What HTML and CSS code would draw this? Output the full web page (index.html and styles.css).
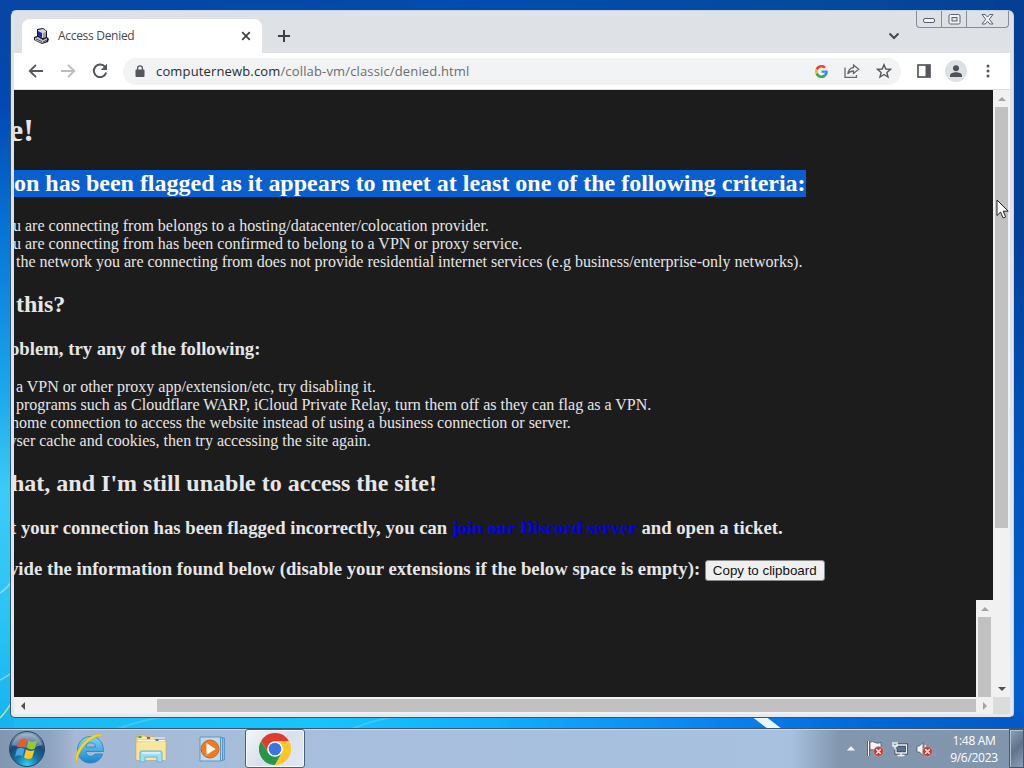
FILE: index.html
```html
<!DOCTYPE html>
<html lang="en">
<head>
<meta charset="utf-8">
<title>Access Denied</title>
<link rel="stylesheet" href="styles.css">
</head>
<body>
<div class="desktop">
  <svg class="wallpaper" viewBox="0 0 1024 768">
    <defs>
      <linearGradient id="left" x1="0" y1="0" x2="0" y2="1">
        <stop offset="0" stop-color="#0745a3"/>
        <stop offset=".14" stop-color="#0349b3"/>
        <stop offset=".3" stop-color="#0674d6"/>
        <stop offset=".5" stop-color="#1ba5ea"/>
        <stop offset=".64" stop-color="#3dcbf5"/>
        <stop offset=".8" stop-color="#2ac4f5"/>
        <stop offset="1" stop-color="#0caeee"/>
      </linearGradient>
      <linearGradient id="right" x1="0" y1="0" x2="0" y2="1">
        <stop offset="0" stop-color="#053f94"/>
        <stop offset=".3" stop-color="#043f98"/>
        <stop offset=".6" stop-color="#0055bd"/>
        <stop offset="1" stop-color="#0560cd"/>
      </linearGradient>
      <linearGradient id="bottom">
        <stop offset="0" stop-color="#1abaf2"/>
        <stop offset=".3" stop-color="#18c4fc"/>
        <stop offset=".48" stop-color="#10aefc"/>
        <stop offset=".68" stop-color="#0a86ee"/>
        <stop offset=".85" stop-color="#0068d6"/>
        <stop offset="1" stop-color="#0458c4"/>
      </linearGradient>
      <linearGradient id="top">
        <stop offset="0" stop-color="#0745a3"/>
        <stop offset=".5" stop-color="#024cae"/>
        <stop offset=".8" stop-color="#054a9c"/>
        <stop offset="1" stop-color="#053f94"/>
      </linearGradient>
    </defs>
    <rect width="1024" height="30" fill="url(#top)"/>
    <rect width="30" height="768" fill="url(#left)"/>
    <rect x="994" width="30" height="768" fill="url(#right)"/>
    <rect y="712" x="14" width="1010" height="20" fill="url(#bottom)"/>
    <path d="M0 593Q8 588 14 578M0 680Q8 676 14 671" stroke="#a5e8fb" stroke-width="1.500" opacity=".7" fill="none"/>
    <path d="M0 718Q7 711 14 698" stroke="#b9e69a" stroke-width="1.500" fill="none"/>
    <path d="M115 730Q150 716 190 714M350 730Q370 720 410 714" stroke="#6ad9fb" stroke-width="2" opacity=".4" fill="none"/>
    <path d="M751 716h14l17 13h-14z" fill="#e9f8ff"/>
  </svg>

  <div class="window">
    <div class="tabstrip">
      <div class="tab">
        <svg class="favicon" width="16" height="16" viewBox="0 0 16 16">
          <path d="M4 1l6-1 4 3v6l2 2-1 3-6 2-8-4v-3l3-1z" fill="#16162a"/>
          <path d="M5 2l5-1 3 2v6l-4 1-4-3z" fill="#d8d8dc"/>
          <path d="M5 3l4 2v5l-4-3z" fill="#2424a8"/>
          <path d="M10 5l3-1v5l-3 1z" fill="#9c9ca4"/>
          <path d="M2 10l3-1 5 3 4-2v3l-5 2-7-3z" fill="#c4c4cc"/>
          <path d="M3 11l6 2.500M10 14l4-2" stroke="#333" stroke-width=".8"/>
        </svg>
        <span class="tab-title">Access Denied</span>
        <svg width="10" height="10" viewBox="0 0 10 10"><path d="M1.200 1.200l7.600 7.600M8.800 1.200l-7.600 7.600" stroke="#3c4043" stroke-width="1.700"/></svg>
      </div>
      <svg class="new-tab" width="14" height="14" viewBox="0 0 14 14"><path d="M7 1v12M1 7h12" stroke="#3c4043" stroke-width="2"/></svg>
      <svg class="tab-search" width="12" height="8" viewBox="0 0 12 8"><path d="M1.500 1.500L6 6l4.500-4.500" stroke="#45484c" stroke-width="2" fill="none"/></svg>
      <div class="win-buttons">
        <span class="min"><svg width="14" height="6" viewBox="0 0 14 6"><rect x="1.500" y=".5" width="11" height="4" rx="1.500" fill="#f4f5f8" stroke="#5b6170"/></svg></span>
        <span class="max"><svg width="13" height="11" viewBox="0 0 13 11"><rect x="1" y=".5" width="11" height="9.500" rx="1.500" fill="#f4f5f8" stroke="#5b6170"/><rect x="4" y="3.500" width="5" height="3.500" fill="#e2e5eb" stroke="#5b6170"/></svg></span>
        <span class="close"><svg width="13" height="11" viewBox="0 0 13 11"><path d="M1 .5h3.200l2.300 2.600L8.800.5H12L8.300 5.300l3.700 4.700H8.800L6.500 7.400 4.200 10H1l3.700-4.700z" fill="#f4f5f8" stroke="#5b6170"/></svg></span>
      </div>
    </div>

    <div class="toolbar">
      <svg width="16" height="16" viewBox="0 0 16 16"><path d="M15 8H2M8 1.800L1.800 8 8 14.200" stroke="#54585c" stroke-width="1.900" fill="none"/></svg>
      <svg width="16" height="16" viewBox="0 0 16 16"><path d="M1 8h13M8 1.800L14.200 8 8 14.200" stroke="#b9bbbe" stroke-width="1.900" fill="none"/></svg>
      <svg width="16" height="16" viewBox="0 0 16 16"><path d="M13.400 4.300A6.300 6.300 0 1 0 14.200 9.500" stroke="#54585c" stroke-width="2" fill="none"/><path d="M15 .8v6.200H8.800z" fill="#54585c"/></svg>
      <div class="omnibox">
        <svg class="lock" width="10" height="13" viewBox="0 0 10 13"><rect x=".5" y="4.500" width="9" height="7.500" rx="1" fill="#54585c"/><path d="M2.600 5V3.200a2.400 2.400 0 0 1 4.800 0V5" stroke="#54585c" stroke-width="1.300" fill="none"/></svg>
        <span class="url">computernewb.com<span class="path">/collab-vm/classic/denied.html</span></span>
        <svg width="13" height="13" viewBox="0 0 48 48">
          <path fill="#ea4335" d="M24 9.500c3.540 0 6.710 1.220 9.210 3.600l6.850-6.850C35.900 2.380 30.470 0 24 0 14.620 0 6.510 5.380 2.560 13.220l7.980 6.190C12.430 13.720 17.740 9.500 24 9.500z"/>
          <path fill="#4285f4" d="M46.980 24.550c0-1.570-.15-3.090-.38-4.550H24v9.020h12.940c-.58 2.960-2.260 5.480-4.780 7.180l7.730 6c4.510-4.180 7.090-10.360 7.090-17.650z"/>
          <path fill="#fbbc05" d="M10.530 28.590A14.500 14.500 0 0 1 10.530 19.410l-7.980-6.190a24 24 0 0 0 0 21.560z"/>
          <path fill="#34a853" d="M24 48c6.480 0 11.930-2.130 15.890-5.810l-7.730-6c-2.150 1.450-4.920 2.300-8.160 2.300-6.260 0-11.570-4.220-13.470-9.910l-7.980 6.190C6.510 42.620 14.620 48 24 48z"/>
        </svg>
        <svg width="16" height="14" viewBox="0 0 16 14"><path d="M1 3.500v9.800h11.500V11M9.500 1l5.200 4.200-5.200 4.200V7C6.500 7 5 8 3.800 10c.4-3.200 2.300-6 5.700-6.500z" stroke="#65696e" stroke-width="1.300" fill="none"/></svg>
        <svg width="16" height="16" viewBox="0 0 16 16"><path d="M8 1.700l1.800 4.300 4.700.4-3.600 3 1.100 4.600-4-2.500L4 14l1.100-4.600-3.600-3L6.200 6z" stroke="#54585c" stroke-width="1.400" fill="none"/></svg>
      </div>
      <svg class="side-panel" width="14" height="14" viewBox="0 0 14 14"><rect x="1" y="1" width="12" height="12" fill="#fff" stroke="#54585c" stroke-width="1.700"/><path d="M8.500 1H13v12H8.500z" fill="#54585c"/></svg>
      <div class="avatar"><svg width="14" height="13" viewBox="0 0 14 13"><circle cx="7" cy="3.200" r="3" fill="#4d535a"/><path d="M1 12V10.500C1 8.300 4.500 7.300 7 7.300s6 1 6 3.200V12z" fill="#4d535a"/></svg></div>
      <svg class="menu" width="4" height="14" viewBox="0 0 4 14"><circle cx="2" cy="2" r="1.500" fill="#54585c"/><circle cx="2" cy="7" r="1.500" fill="#54585c"/><circle cx="2" cy="12" r="1.500" fill="#54585c"/></svg>
    </div>

    <div class="view">
      <div class="page">
        <h1 class="cut-1">e!</h1>
        <h2 class="cut-2"><span class="selected">on has been flagged as it appears to meet at least one of the following criteria:</span></h2>
        <ul>
          <li class="cut-3">u are connecting from belongs to a hosting/datacenter/colocation provider.</li>
          <li class="cut-3">u are connecting from has been confirmed to belong to a VPN or proxy service.</li>
          <li class="cut-4">the network you are connecting from does not provide residential internet services (e.g business/enterprise-only networks).</li>
        </ul>
        <h2 class="cut-4">this?</h2>
        <h3 class="cut-5">oblem, try any of the following:</h3>
        <ul>
          <li class="cut-4">a VPN or other proxy app/extension/etc, try disabling it.</li>
          <li class="cut-4">programs such as Cloudflare WARP, iCloud Private Relay, turn them off as they can flag as a VPN.</li>
          <li class="cut-6">home connection to access the website instead of using a business connection or server.</li>
          <li class="cut-7">wser cache and cookies, then try accessing the site again.</li>
        </ul>
        <h2 class="cut-8">hat, and I'm still unable to access the site!</h2>
        <h3 class="cut-9">t your connection has been flagged incorrectly, you can <a href="#">join our Discord server</a> and open a ticket.</h3>
        <h3 class="cut-10">vide the information found below (disable your extensions if the below space is empty): <button class="copy">Copy to clipboard</button></h3>
        <div class="info">
          <div class="scroll-v">
            <i class="arrow up off"></i>
            <div class="thumb"></div>
          </div>
        </div>
      </div>
      <div class="scroll-v main-scroll">
        <i class="arrow up off"></i>
        <div class="thumb"></div>
        <i class="arrow down"></i>
      </div>
    </div>
    <div class="scroll-h">
      <i class="arrow left"></i>
      <div class="thumb"></div>
      <i class="arrow right off"></i>
      <div class="corner"></div>
    </div>
  </div>

  <div class="taskbar">
    <svg class="start" width="38" height="38" viewBox="0 0 38 38">
      <defs>
        <radialGradient id="orb" cx=".5" cy=".95" r=".9">
          <stop offset="0" stop-color="#2fd3f5"/>
          <stop offset=".35" stop-color="#1576a8"/>
          <stop offset=".7" stop-color="#1d4672"/>
          <stop offset="1" stop-color="#7f9dba"/>
        </radialGradient>
      </defs>
      <circle cx="19" cy="19" r="17.500" fill="url(#orb)" stroke="#2b4563"/>
      <path d="M4 15A15.500 15.500 0 0 1 34 15Q19 20 4 15z" fill="#fff" opacity=".3"/>
      <path d="M12 10q4-3 7 0l-2 7.500q-4-2-7.500 0z" fill="#ee5a24"/>
      <path d="M20.500 10.500q4 2.500 8.500 0l-2 8q-4 2-8-.5z" fill="#93c83e"/>
      <path d="M9 19q4-2.500 7.500 0l-2 7.500q-3.500-2.500-7.500 0z" fill="#43a5e8"/>
      <path d="M18 19.500q4 2.500 8.500.5l-2.500 8q-4 2-8-.5z" fill="#fcc81c"/>
    </svg>
    <svg class="ie" width="32" height="32" viewBox="0 0 32 32">
      <defs><linearGradient id="e" x2="0" y2="1"><stop offset="0" stop-color="#7cd7fa"/><stop offset="1" stop-color="#1a83cb"/></linearGradient></defs>
      <path d="M30.500 18.500H13c.3 3.300 2 4.700 4.700 4.700 2 0 3.500-.8 4.300-2.200h7.500C28 26.500 23.500 30 17.500 30 9.500 30 4.500 24.500 4.500 17S10 3.500 17.500 3.500s13.300 5.500 13 15zM22.500 14c-.4-3-2.300-4.200-5-4.200s-4.200 1.200-4.600 4.200z" fill="url(#e)" stroke="#2c80b5" stroke-width=".8"/>
      <path d="M3.500 30C-1 25 8 4 26 .7c2.300-.2 3.300 1 2.700 3.300-.8-1-2.500-1.500-4.700-.3C12 8 5 20 3.500 30z" fill="#f6d529" stroke="#d4a91c" stroke-width=".5"/>
    </svg>
    <svg class="explorer" width="32" height="30" viewBox="0 0 32 30">
      <path d="M1 3h2V1h8v2h9v3h11v20H1z" fill="#f1d77c" stroke="#c7a958" stroke-width=".8"/>
      <path d="M3 4h27M3 6.500h27" stroke="#fff8d6" stroke-width="1"/>
      <path d="M3.500 2h3v2h-3z" fill="#43a453"/><path d="M12 3h3v2h-3z" fill="#d8442e"/><path d="M20.500 5h3v2h-3z" fill="#3284c5"/>
      <path d="M1.500 9q14-3 29-1v18h-29z" fill="#f8e69d"/>
      <path d="M5 28V18.500q0-1.500 1.500-1.500h19q1.500 0 1.500 1.500V28h-5v-5H10v5z" fill="#a6dcf3" stroke="#61b4d8" stroke-width="1"/>
      <path d="M7 19h18" stroke="#e3f6fd" stroke-width="1.500"/>
    </svg>
    <svg class="wmp" width="28" height="28" viewBox="0 0 28 28">
      <path d="M8 3h17.500v22H8z" fill="#8bbde0" stroke="#5a97c6"/>
      <path d="M5 2.500h18.500v23H5z" fill="#a9d1ee" stroke="#5a97c6"/>
      <path d="M1 2h20.500v24H1z" fill="#bcdcf3" stroke="#5a97c6"/>
      <circle cx="11" cy="14" r="9" fill="#ee7a22" stroke="#d06519"/>
      <path d="M7.500 8l9 6-9 6z" fill="#fff"/>
    </svg>
    <div class="task-active">
      <svg width="32" height="32" viewBox="0 0 32 32">
        <path d="M16 8h13.860A16 16 0 0 0 2.140 8l7 12z" fill="#e13b2f"/>
        <path d="M9.100 20L2.140 8A16 16 0 0 0 16 32l6.900-12z" fill="#2b9547"/>
        <path d="M22.900 20L16 32A16 16 0 0 0 29.860 8H16z" fill="#fcc52b"/>
        <circle cx="16" cy="16" r="7.800" fill="#fff"/>
        <circle cx="16" cy="16" r="6.300" fill="#3876e0"/>
      </svg>
    </div>
    <div class="tray">
      <svg class="tray-up" width="8" height="5" viewBox="0 0 8 5"><path d="M4 0l4 4.500H0z" fill="#f3f7fb"/></svg>
      <svg width="17" height="17" viewBox="0 0 17 17">
        <path d="M1.500 1v15" stroke="#333f50" stroke-width="2.500"/><path d="M1.500 1v15" stroke="#fff" stroke-width="1.200"/>
        <path d="M3 2q3-1 5 .5t6 0v8q-4 1.500-6 0t-5-.5z" fill="#f6f7f9" stroke="#4b586c" stroke-width=".8"/>
        <circle cx="11.500" cy="11.500" r="4.900" fill="#cf3535" stroke="#e9a7a4" stroke-width=".6"/><path d="M9.300 9.300l4.400 4.400M13.700 9.300l-4.400 4.400" stroke="#fff" stroke-width="1.500"/>
      </svg>
      <svg width="16" height="16" viewBox="0 0 16 16">
        <path d="M5 4h9.500v8H4V8" fill="#5d7188" stroke="#2d3b4d" stroke-width="2.800"/><path d="M5 4h9.500v8H4V8M9 12v2.500M5.500 14.500h7" fill="none" stroke="#f4f6f9" stroke-width="1.300"/>
        <path d="M1 1v4h4V1M3 5v3.500M3 1v2" fill="none" stroke="#f4f6f9" stroke-width="1.300"/>
      </svg>
      <svg width="17" height="16" viewBox="0 0 17 16">
        <path d="M1 5h2.500L7 1.500v13L3.500 11H1z" fill="#f6f7f9" stroke="#3f4c5f" stroke-width=".7"/><path d="M9 4q1.500 3 0 7" stroke="#fff" stroke-width="1.200" fill="none"/>
        <circle cx="11.500" cy="10.500" r="4.900" fill="#cf3535" stroke="#e9a7a4" stroke-width=".6"/><path d="M9.300 8.300l4.400 4.400M13.700 8.300l-4.400 4.400" stroke="#fff" stroke-width="1.500"/>
      </svg>
      <div class="clock"><span class="time">1:48 AM</span><span class="date">9/6/2023</span></div>
      <div class="show-desktop"></div>
    </div>
  </div>

  <svg class="cursor" width="14" height="21" viewBox="0 0 14 21"><path d="M1 1v15.500l3.600-3.400 2.500 5.900 2.600-1.100-2.500-5.700h5z" fill="#fff" stroke="#222"/></svg>
</div>
</body>
</html>
```
FILE: styles.css
```css
body {
    margin: 0;
    font-family: "Open Sans", sans-serif;
}
svg {
    display: block;
    flex: none;
}
.desktop {
    position: relative;
    display: flex;
    flex-direction: column;
    justify-content: space-between;
    width: 1024px;
    height: 768px;
    overflow: hidden;
    background: #0a6fd0;
}
.wallpaper {
    position: absolute;
    width: 1024px;
    height: 768px;
}

/* browser window */
.window {
    position: relative;
    display: flex;
    flex-direction: column;
    box-sizing: border-box;
    width: 1004px;
    height: 708px;
    margin: 10px 0 0 10px;
    padding: 0 3px 3px;
    border: 1px solid #33587f;
    border-top-color: #c6d3e4;
    border-right-color: #c3d3e3;
    border-radius: 6px 6px 5px 5px;
    background: linear-gradient(#dee1e6, #dee2ec 45%, #e6e8ee);
    overflow: hidden;
}
.tabstrip {
    display: flex;
    height: 42px;
    flex: none;
}
.tab {
    display: flex;
    align-items: center;
    box-sizing: border-box;
    width: 240px;
    height: 34px;
    margin: 8px 0 0 8px;
    padding: 0 11px 0 12px;
    border-radius: 8px 8px 0 0;
    background: #fff;
}
.favicon {
    margin-left: -1px;
}
.tab-title {
    flex: 1;
    margin-left: 9px;
    margin-top: -1px;
    font-size: 12px;
    letter-spacing: -.3px;
    color: #45494d;
}
.new-tab {
    margin: 18px 0 0 15px;
}
.tab-search {
    margin: 21px 0 0 auto;
}
.win-buttons {
    display: flex;
    box-sizing: border-box;
    height: 17px;
    width: 93px;
    margin: 0 1px 0 16px;
    border: 1px solid #868c99;
    border-top: 0;
    border-radius: 0 0 4px 4px;
}
.win-buttons span {
    display: flex;
    align-items: center;
    justify-content: center;
}
.min {
    width: 24px;
    padding-top: 4px;
    border-right: 1px solid #868c99;
}
.max {
    width: 24px;
    border-right: 1px solid #868c99;
}
.close {
    flex: 1;
}
.toolbar {
    display: flex;
    align-items: center;
    box-sizing: border-box;
    height: 37px;
    flex: none;
    gap: 16px;
    padding: 0 20px 0 14px;
    border-bottom: 1px solid #dadce0;
    background: #fff;
}
.omnibox {
    display: flex;
    align-items: center;
    box-sizing: border-box;
    flex: 1;
    height: 27px;
    margin-left: -1px;
    padding: 0 9px 0 12px;
    gap: 16px;
    border-radius: 14px;
    background: #f1f3f4;
}
.url {
    flex: 1;
    margin-left: -5px;
    font-size: 13px;
    letter-spacing: .15px;
    white-space: nowrap;
    color: #2b2e31;
}
.path {
    color: #6a6e73;
}
.side-panel {
    margin-right: -2px;
}
.avatar {
    display: flex;
    align-items: center;
    justify-content: center;
    width: 22px;
    height: 22px;
    margin-right: 3px;
    border-radius: 50%;
    background: #dde1e6;
}
.view {
    display: flex;
    flex: 1;
    min-height: 0;
}

/* the page, scrolled to its right edge */
.page {
    display: flex;
    flex-direction: column;
    flex: 1;
    box-sizing: border-box;
    min-width: 0;
    overflow: hidden;
    padding-top: 22px;
    background: #1c1c1c;
    color: #e6e6e6;
    font-family: "Liberation Serif", serif;
    font-size: 16px;
    white-space: nowrap;
}
h1, h2, h3, ul {
    margin: 0;
    padding: 0;
}
h1 {
    font-size: 32px;
    line-height: 36px;
    margin-bottom: 22px;
}
h2 {
    font-size: 24px;
    line-height: 27px;
    margin-bottom: 20px;
}
h3 {
    font-size: 18.72px;
    line-height: 22px;
    margin-bottom: 18px;
}
ul {
    list-style: none;
    line-height: 18px;
    margin-bottom: 20px;
}
.selected {
    display: inline-block;
    background: #0a5fd0;
    color: #fff;
    letter-spacing: -.012px;
}
.cut-1 { text-indent: -5px; }
.cut-2 { text-indent: 0; }
.cut-3 { text-indent: -1px; }
.cut-4 { text-indent: 2px; }
.cut-5 { text-indent: -4px; }
.cut-6 { text-indent: -3px; }
.cut-7 { text-indent: -9px; }
.cut-8 { text-indent: -3px; }
.cut-9 { text-indent: -4px; }
.cut-10 { 
    text-indent: -5px;
    margin-top: 1px;
    margin-bottom: 19px;
}
.page a {
    color: #0000ee;
}
.copy {
    height: 21px;
    padding: 0 7px;
    border: 1px solid #8a8a8a;
    border-radius: 3px;
    background: #efefef;
    color: #111;
    font-family: "Liberation Sans", sans-serif;
    font-size: 13.33px;
    text-indent: 0;
    vertical-align: middle;
}
.info {
    display: flex;
    flex: 1;
    justify-content: flex-end;
}

/* scrollbars */
.scroll-v {
    display: flex;
    flex-direction: column;
    align-items: center;
    width: 17px;
    flex: none;
    background: #f1f1f1;
}
.scroll-v .thumb {
    width: 13px;
    flex: 1;
    background: #c1c1c1;
}
.main-scroll .thumb {
    flex: none;
    height: 421px;
    margin-bottom: auto;
}
.arrow {
    width: 17px;
    height: 17px;
    flex: none;
    display: flex;
    align-items: center;
    justify-content: center;
}
.arrow:before {
    content: "";
    border: 4px solid transparent;
}
.up:before {
    border-top: 0;
    border-bottom-color: #505050;
}
.down:before {
    border-bottom: 0;
    border-top-color: #505050;
}
.left:before {
    border-left: 0;
    border-right-color: #505050;
}
.right:before {
    border-right: 0;
    border-left-color: #505050;
}
.up.off:before {
    border-bottom-color: #a3a3a3;
}
.right.off:before {
    border-left-color: #a3a3a3;
}
.scroll-h {
    display: flex;
    align-items: center;
    height: 17px;
    flex: none;
    background: #f1f1f1;
}
.scroll-h .thumb {
    height: 13px;
    flex: 1;
    margin-left: 126px;
    background: #c1c1c1;
}
.corner {
    width: 17px;
    height: 17px;
    background: #dcdcdc;
}

/* taskbar */
.taskbar {
    position: relative;
    display: flex;
    align-items: center;
    box-sizing: border-box;
    height: 40px;
    border-top: 1px solid #3d5673;
    box-shadow: inset 0 1px #c9d9ea;
    background: linear-gradient(90deg, #8296b0, #8ea3bf 50px, #a5b8d4 75px, #a7bfdd 300px, #a8c1de 790px, #8296ae 840px, #8195ad);
}
.start {
    margin-left: 8px;
}
.ie {
    margin-left: 27px;
}
.explorer {
    margin-left: 30px;
}
.wmp {
    margin-left: 32px;
}
.task-active {
    display: flex;
    align-items: center;
    justify-content: center;
    box-sizing: border-box;
    width: 60px;
    height: 39px;
    margin-left: 18px;
    border: 1px solid #4a607c;
    border-radius: 3px;
    background: linear-gradient(135deg, #f4f6fa, #d7e0ec 50%, #e2e8f1);
    box-shadow: inset 0 0 0 1px #f6f9fc;
}
.tray {
    display: flex;
    align-items: center;
    height: 39px;
    margin-left: auto;
    gap: 8px;
}
.tray-up {
    margin-right: 4px;
}
.clock {
    display: flex;
    flex-direction: column;
    align-items: center;
    width: 50px;
    margin-left: 8px;
    margin-right: 2px;
    font-size: 12px;
    letter-spacing: -.3px;
    line-height: 17px;
    color: #fff;
}
.time, .date {
    white-space: nowrap;
}
.show-desktop {
    box-sizing: border-box;
    width: 15px;
    height: 39px;
    border: 1px solid #46586f;
    box-shadow: inset 1px 1px #b3c2d3;
    background: linear-gradient(135deg, #8fa1b6, #5f738c 50%, #8c9fb6);
}
.cursor {
    position: absolute;
    left: 996px;
    top: 199px;
}
```
